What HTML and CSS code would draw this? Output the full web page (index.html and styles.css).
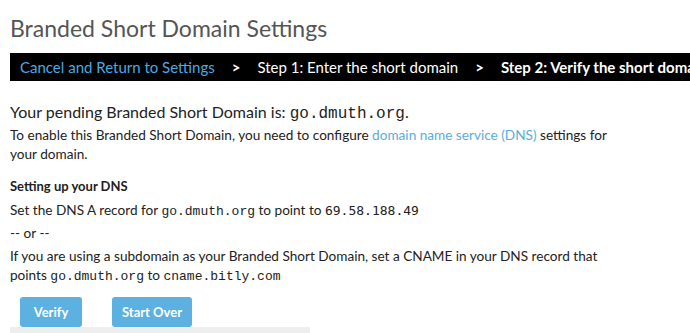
FILE: index.html
```html
<!DOCTYPE html>
<html lang="en">
<head>
    <meta charset="UTF-8">
    <title>Branded Short Domain Settings</title>
    <link rel="stylesheet" href="styles.css">
</head>
<body>
    <div class="page">
        <h1>Branded Short Domain Settings</h1>

        <!-- Step trail -->
        <div class="steps">
            <a href="#" class="cancel">Cancel and Return to Settings</a>
            <span class="sep">&gt;</span>
            <span>Step 1: Enter the short domain</span>
            <span class="sep">&gt;</span>
            <span class="current">Step 2: Verify the short domain</span>
        </div>

        <p class="pending">Your pending Branded Short Domain is: <code class="courier">go.dmuth.org</code>.</p>
        <p>To enable this Branded Short Domain, you need to configure <a href="#">domain name service (DNS)</a> settings for your domain.</p>

        <h3>Setting up your DNS</h3>
        <p>Set the DNS A record for <code class="courier">go.dmuth.org</code> to point to <code class="sans-mono">69.58.188.49</code></p>
        <p>-- or --</p>
        <p>If you are using a subdomain as your Branded Short Domain, set a CNAME in your DNS record that points <code class="courier">go.dmuth.org</code> to <code class="courier">cname.bitly.com</code></p>

        <div class="actions">
            <button class="btn-verify">Verify</button>
            <button class="btn-restart">Start Over</button>
        </div>
        <div class="footer-strip"></div>
    </div>
</body>
</html>
```

FILE: styles.css
```css
body, h1, h3, p {
    margin: 0;
    padding: 0;
}

body {
    font-family: 'Lato', sans-serif;
    color: #222;
    background-color: #fff;
    overflow: hidden;
}

.page {
    padding: 14px 0 0 10px;
}

h1 {
    font-size: 23px;
    font-weight: 400;
    color: #555;
    line-height: 28px;
}

/* Step trail */
.steps {
    margin-top: 11px;
    height: 28px;
    background-color: #000;
    color: #fff;
    display: flex;
    align-items: center;
    gap: 15px;
    padding-left: 10px;
    font-size: 15px;
    white-space: nowrap;
    overflow: hidden;
}

.steps .cancel {
    color: #4aa9e4;
    text-decoration: none;
}

.steps .sep {
    font-weight: 700;
    padding: 0 2px;
}

.steps .current {
    font-weight: 700;
}

p {
    font-size: 13.6px;
    line-height: 19px;
    width: 620px;
}

a {
    color: #5aace0;
    text-decoration: none;
}

.pending {
    margin-top: 21px;
    font-size: 16px;
    line-height: 20px;
    margin-bottom: 2px;
}

code {
    font-size: 13px;
    line-height: 1;
}

.courier {
    font-family: 'Liberation Mono', monospace;
}

.pending .courier {
    font-size: 16px;
}

.sans-mono {
    font-family: 'DejaVu Sans Mono', monospace;
}

h3 {
    font-size: 13px;
    font-weight: 700;
    line-height: 16px;
    margin-top: 14px;
    margin-bottom: 7px;
}

p + p {
    margin-top: 4px;
}

.actions {
    display: flex;
    gap: 30px;
    padding-left: 10px;
    margin-top: 12px;
}

button {
    font-family: 'Lato', sans-serif;
    font-size: 13px;
    font-weight: 700;
    color: #fff;
    background-color: #5cb1e0;
    border: none;
    border-radius: 3px;
    height: 30px;
    padding: 0;
}

.btn-verify {
    width: 62px;
}

.btn-restart {
    width: 80px;
}

.footer-strip {
    width: 300px;
    height: 8px;
    background-color: #eee;
}
```
